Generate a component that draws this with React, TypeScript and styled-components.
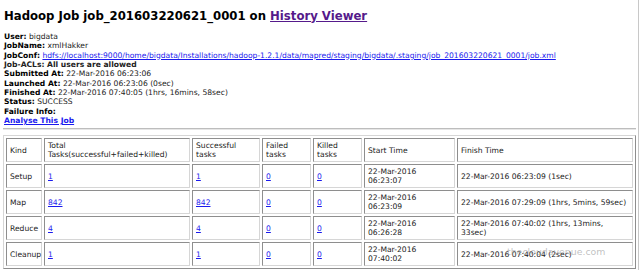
import * as React from 'react';
import styled, { createGlobalStyle } from 'styled-components';

const GlobalStyle = createGlobalStyle`
  html, body {
    margin: 0;
    padding: 0;
    background: #fff;
  }
  body {
    font-family: 'DejaVu Sans', Verdana, sans-serif;
    font-size: 7.6px;
    color: #222;
  }
`;

const Page = styled.div`
  position: relative;
  width: 635px;
  height: 270px;
  padding: 0 0 0 3px;
  border-right: 1px solid #c8c8c8;
  overflow: hidden;
`;

const Title = styled.h1`
  margin: 8.5px 0 0 1px;
  font-size: 11.7px;
  font-weight: bold;
  color: #000;
  line-height: normal;
`;

const Link = styled.a<{ $visited?: boolean; $bold?: boolean }>`
  color: ${({ $visited }) => ($visited ? '#551a8b' : '#1a1aee')};
  font-weight: ${({ $bold }) => ($bold ? 'bold' : 'inherit')};
  text-decoration: underline;
  cursor: pointer;
`;

const Info = styled.div`
  margin: 9.4px 0 0 1px;
  line-height: 9.35px;
`;

const Line = styled.div<{ $bold?: boolean }>`
  font-weight: ${({ $bold }) => ($bold ? 'bold' : 'normal')};
  white-space: nowrap;
`;

const Label = styled.b`
  color: #000;
`;

const Rule = styled.hr`
  margin: 3px 2px 0 0;
  border: 0;
  border-top: 1px solid #bdbdbd;
  border-bottom: 1px solid #e6e6e6;
  height: 0;
`;

const Table = styled.table`
  margin-top: 5px;
  width: 633px;
  table-layout: fixed;
  border-collapse: separate;
  border-spacing: 2px;
  border: 1px solid;
  border-color: #d6d6d6 #8e8e8e #8e8e8e #d6d6d6;
`;

const Cell = styled.td<{ $w?: number }>`
  box-sizing: border-box;
  width: ${({ $w }) => ($w ? `${$w}px` : 'auto')};
  padding: 2px 3px;
  border: 1px solid;
  border-color: #8e8e8e #d6d6d6 #d6d6d6 #8e8e8e;
  text-align: left;
  vertical-align: middle;
  font-weight: normal;
  line-height: 9px;
  height: 24px;
  color: #222;
`;

const Watermark = styled.div`
  position: absolute;
  left: 507px;
  top: 246px;
  font-family: 'DejaVu Sans', sans-serif;
  font-size: 9.4px;
  color: rgba(140, 140, 140, 0.55);
  pointer-events: none;
`;

const widths = [36, 146, 68, 49, 49, 91, 176];
const headers = [
  'Kind',
  'Total Tasks(successful+failed+killed)',
  'Successful tasks',
  'Failed tasks',
  'Killed tasks',
  'Start Time',
  'Finish Time',
];

const rows = [
  ['Setup', '1', '1', '0', '0', '22-Mar-2016 06:23:07', '22-Mar-2016 06:23:09 (1sec)'],
  ['Map', '842', '842', '0', '0', '22-Mar-2016 06:23:09', '22-Mar-2016 07:29:09 (1hrs, 5mins, 59sec)'],
  ['Reduce', '4', '4', '0', '0', '22-Mar-2016 06:26:28', '22-Mar-2016 07:40:02 (1hrs, 13mins, 33sec)'],
  ['Cleanup', '1', '1', '0', '0', '22-Mar-2016 07:40:02', '22-Mar-2016 07:40:04 (2sec)'],
];

const App: React.FC = () => {
  return (
    <Page>
      <GlobalStyle />
      <Title>
        Hadoop Job job_201603220621_0001 on <Link $visited>History Viewer</Link>
      </Title>
      <Info>
        <Line><Label>User:</Label> bigdata</Line>
        <Line><Label>JobName:</Label> xmlHakker</Line>
        <Line>
          <Label>JobConf:</Label>{' '}
          <Link>hdfs://localhost:9000/home/bigdata/Installations/hadoop-1.2.1/data/mapred/staging/bigdata/.staging/job_201603220621_0001/job.xml</Link>
        </Line>
        <Line $bold>Job-ACLs: All users are allowed</Line>
        <Line><Label>Submitted At:</Label> 22-Mar-2016 06:23:06</Line>
        <Line><Label>Launched At:</Label> 22-Mar-2016 06:23:06 (0sec)</Line>
        <Line><Label>Finished At:</Label> 22-Mar-2016 07:40:05 (1hrs, 16mins, 58sec)</Line>
        <Line><Label>Status:</Label> SUCCESS</Line>
        <Line><Label>Failure Info:</Label></Line>
        <Line><Link $bold>Analyse This Job</Link></Line>
      </Info>
      <Rule />
      <Table>
        <tbody>
          <tr>
            {headers.map((h, i) => (
              <Cell as="th" key={h} $w={widths[i]}>{h}</Cell>
            ))}
          </tr>
          {rows.map((r) => (
            <tr key={r[0]}>
              {r.map((v, i) => (
                <Cell key={i}>
                  {i >= 1 && i <= 4 ? <Link>{v}</Link> : v}
                </Cell>
              ))}
            </tr>
          ))}
        </tbody>
      </Table>
      <Watermark>thecloudavenue.com</Watermark>
    </Page>
  );
};

export default App;
